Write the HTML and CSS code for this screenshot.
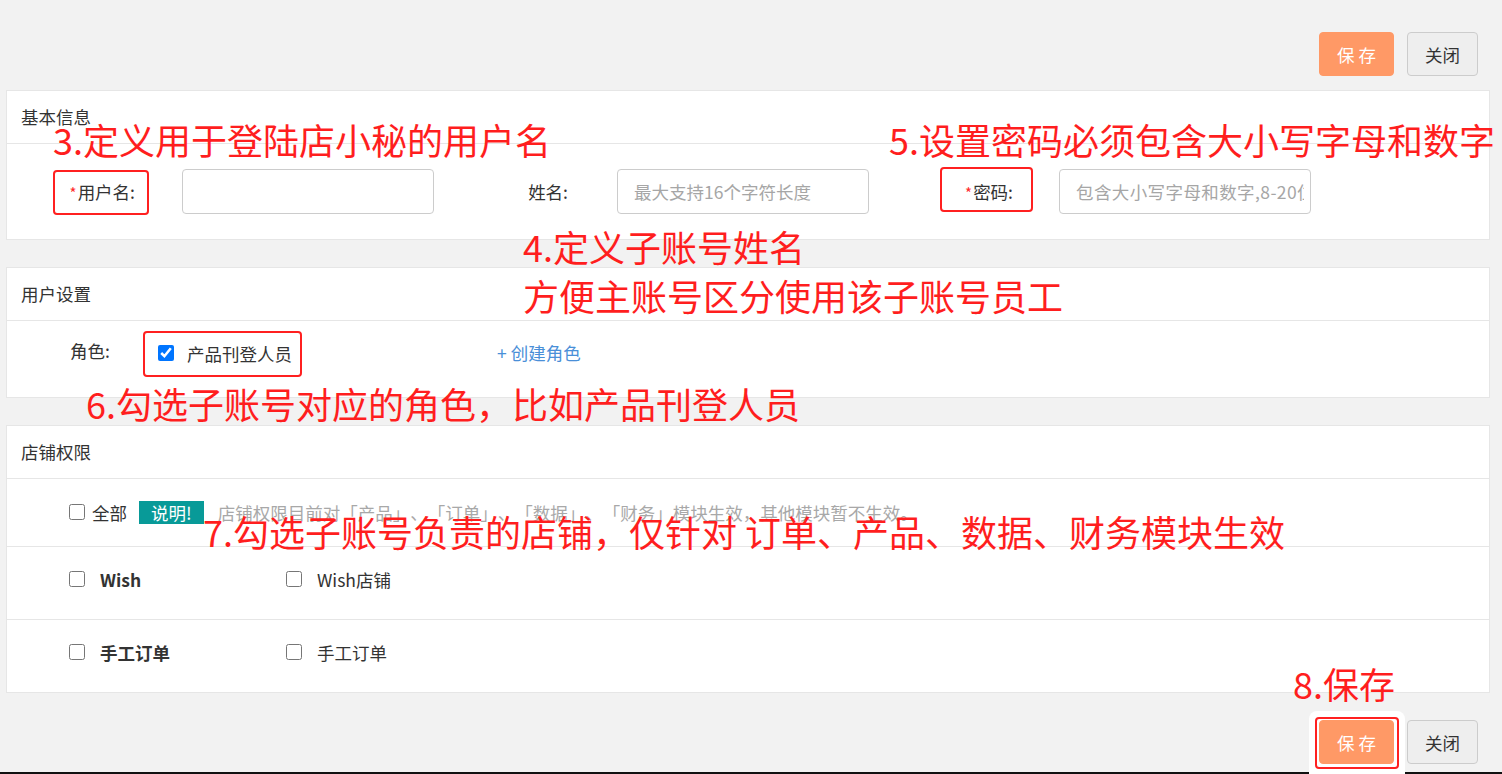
FILE: index.html
```html
<!DOCTYPE html>
<html lang="zh-CN">
<head>
<meta charset="utf-8">
<title>子账号设置</title>
<link rel="stylesheet" href="styles.css">
</head>
<body>
<div class="page">
  <div class="topbar">
    <button class="btn btn-primary">保 存</button>
    <button class="btn">关闭</button>
  </div>

  <section class="card">
    <div class="card-hd">基本信息</div>
    <div class="card-bd basic-row">
      <div class="field f-user">
        <label class="lbl"><span class="req">*</span>用户名:</label>
        <input class="ipt" type="text">
      </div>
      <div class="field f-name">
        <label class="lbl">姓名:</label>
        <input class="ipt" type="text" placeholder="最大支持16个字符长度">
      </div>
      <div class="field f-pwd">
        <label class="lbl"><span class="req">*</span>密码:</label>
        <input class="ipt ipt-pwd" type="text" placeholder="包含大小写字母和数字,8-20位">
      </div>
    </div>
  </section>

  <section class="card">
    <div class="card-hd">用户设置</div>
    <div class="card-bd role-row">
      <span class="role-lbl">角色:</span>
      <label class="role-opt"><input type="checkbox" class="cb" checked><span>产品刊登人员</span></label>
      <a class="link">+ 创建角色</a>
    </div>
  </section>

  <section class="card last">
    <div class="card-hd">店铺权限</div>
    <div class="shop-row shop-all">
      <label class="cb-lbl all"><input type="checkbox" class="cb"><span>全部</span></label>
      <span class="badge">说明!</span>
      <span class="hint">店铺权限目前对「产品」、「订单」、「数据」、「财务」模块生效，其他模块暂不生效。</span>
    </div>
    <div class="shop-row">
      <label class="cb-lbl plat"><input type="checkbox" class="cb"><b>Wish</b></label>
      <label class="cb-lbl shop"><input type="checkbox" class="cb"><span>Wish店铺</span></label>
    </div>
    <div class="shop-row">
      <label class="cb-lbl plat"><input type="checkbox" class="cb"><b>手工订单</b></label>
      <label class="cb-lbl shop"><input type="checkbox" class="cb"><span>手工订单</span></label>
    </div>
  </section>

  <div class="bottombar">
    <button class="btn btn-primary">保 存</button>
    <button class="btn">关闭</button>
  </div>
  <div class="edge"></div>

  <!-- annotations -->
  <div class="mark-box mb1"></div>
  <div class="mark-box mb2"></div>
  <div class="mark-box mb3"></div>
  <div class="halo"></div>
  <div class="mark-box mb4"></div>
  <div class="note n3">3.定义用于登陆店小秘的用户名</div>
  <div class="note n5">5.设置密码必须包含大小写字母和数字</div>
  <div class="note n4">4.定义子账号姓名<br>方便主账号区分使用该子账号员工</div>
  <div class="note n6">6.勾选子账号对应的角色，比如产品刊登人员</div>
  <div class="note n7">7.勾选子账号负责的店铺，仅针对 订单、产品、数据、财务模块生效</div>
  <div class="note n8">8.保存</div>
</div>
</body>
</html>
```

FILE: styles.css
```css
* { box-sizing: border-box; }
html, body { margin: 0; padding: 0; }
body {
  background: #f2f2f2;
  font-family: "Noto Sans CJK SC", "Noto Sans", sans-serif;
  font-size: 17.5px;
  color: #333;
  text-spacing-trim: space-all;
}
.page {
  position: relative;
  width: 1502px;
  height: 774px;
  padding: 0 12px 0 6px;
  overflow: hidden;
}
.topbar {
  height: 90px;
  padding: 32px 12px 0 0;
  display: flex;
  justify-content: flex-end;
  gap: 13px;
}
.btn {
  width: 71px;
  height: 44px;
  border: 1px solid #cccccc;
  border-radius: 4px;
  background: #eeeeee;
  color: #333;
  font-family: inherit;
  font-size: 17.5px;
  padding: 0;
  cursor: pointer;
}
.btn-primary {
  width: 75px;
  background: #ff9966;
  border-color: #ff9966;
  color: #fff;
}
.card {
  background: #fff;
  border: 1px solid #e6e6e6;
  margin-bottom: 27px;
}
.card.last { margin-bottom: 0; }
.card-hd {
  height: 53px;
  line-height: 52px;
  padding-left: 14px;
  border-bottom: 1px solid #e6e6e6;
  font-size: 17.5px;
}
.basic-row {
  height: 95px;
  padding-top: 25px;
  display: flex;
  align-items: flex-start;
}
.field { display: flex; align-items: center; height: 45px; }
.lbl {
  text-align: right;
  margin-right: 47px;
  white-space: nowrap;
}
.req { color: #ff2a2a; font-size: 15px; margin-right: 1px; }
.f-user .lbl { width: 128px; }
.f-name { margin-left: 40px; }
.f-name .lbl { width: 94px; margin-right: 49px; }
.f-pwd { margin-left: 40px; }
.f-pwd .lbl { width: 104px; margin-right: 46px; }
.ipt {
  width: 252px;
  height: 45px;
  border: 1px solid #cccccc;
  border-radius: 4px;
  padding: 0 6px 0 16px;
  font-family: inherit;
  font-size: 17.5px;
  color: #333;
  outline: none;
}
.ipt::placeholder { color: #a6a6a6; }
.ipt-pwd::placeholder { letter-spacing: 0.4px; }

.role-row {
  height: 76px;
  padding: 17px 0 0 63px;
  display: flex;
  align-items: flex-start;
}
.role-lbl { width: 88px; line-height: 26px; }
.role-opt {
  width: 339px;
  display: flex;
  align-items: center;
  height: 30px;
}
.role-opt span { margin-left: 13px; }
.link { color: #4a8fd8; line-height: 30px; text-decoration: none; }

.cb {
  width: 16px;
  height: 16px;
  margin: 0;
  accent-color: #0075ff;
}
.shop-row {
  display: flex;
  align-items: center;
  padding: 0 0 8px 62px;
  height: 73px;
  border-top: 1px solid #e6e6e6;
}
.shop-row.shop-all { border-top: none; height: 67px; padding-bottom: 1px; }
.cb-lbl { display: flex; align-items: center; }
.cb-lbl.all span { margin-left: 7px; }
.cb-lbl.shop span { margin-left: 15px; }
.cb-lbl b { margin-left: 15px; font-weight: 700; }
.plat { width: 217px; }
.badge {
  margin-left: 12px;
  background: #089a98;
  color: #fff;
  height: 23px;
  line-height: 23px;
  padding: 0 12px 0 12px;
  font-size: 17.5px;
}
.hint { margin-left: 14px; color: #a8a8a8; font-size: 17.5px; }

.bottombar {
  height: 79px;
  padding: 27px 12px 0 0;
  display: flex;
  justify-content: flex-end;
  gap: 13px;
}
.edge {
  position: relative;
  left: -6px;
  width: 1502px;
  height: 2px;
  background: #111;
}

/* annotation overlays */
.note {
  position: absolute;
  color: #ff1e1e;
  font-size: 36px;
  line-height: 36px;
  white-space: nowrap;
  font-family: "Noto Sans CJK SC", sans-serif;
}
.n3 { left: 53px; top: 121px; }
.n5 { left: 889px; top: 121px; }
.n4 { left: 523px; top: 222px; line-height: 49px; }
.n6 { left: 86px; top: 385px; }
.n7 { left: 203px; top: 513px; }
.n8 { left: 1293px; top: 665px; }
.mark-box {
  position: absolute;
  border: 2px solid #ff2020;
  border-radius: 4px;
}
.mb1 { left: 53px; top: 170px; width: 96px; height: 45px; }
.mb2 { left: 940px; top: 167px; width: 93px; height: 45px; }
.mb3 { left: 143px; top: 331px; width: 159px; height: 46px; }
.mb4 { left: 1315px; top: 717px; width: 84px; height: 52px; z-index: 3; }
.halo {
  position: absolute;
  left: 1309px;
  top: 711px;
  width: 96px;
  height: 70px;
  background: #fff;
  border-radius: 8px;
  z-index: 1;
}
.bottombar .btn-primary { position: relative; z-index: 2; }
```
